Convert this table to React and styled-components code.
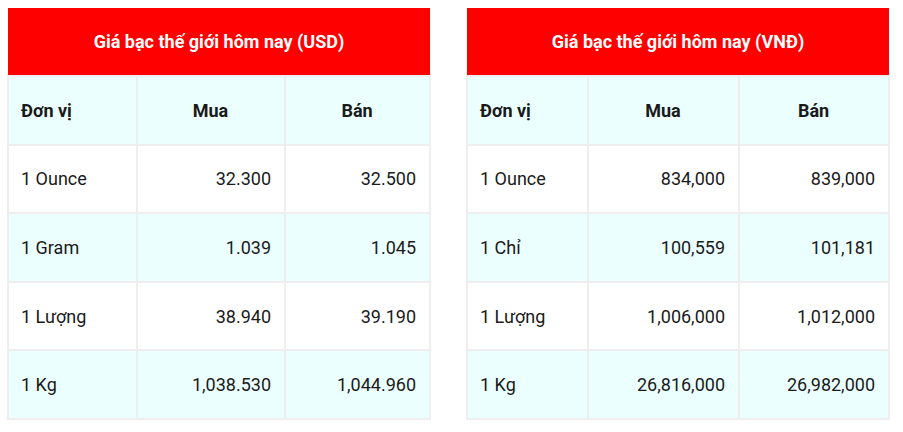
import React from 'react'
import styled, { createGlobalStyle } from 'styled-components'

const Global = createGlobalStyle`
  body {
    margin: 0;
    background: #fff;
    font-family: Roboto, "Noto Sans", Arial, sans-serif;
  }
`

const Page = styled.div`
  display: flex;
  gap: 35px;
  padding: 8px 7px;
`

const Table = styled.table`
  border-collapse: collapse;
  width: ${props => props.width}px;
  table-layout: fixed;
  font-size: 18px;
  color: #1a1a1a;
`

const Caption = styled.th`
  background: #ff0000;
  color: #fff;
  font-weight: 700;
  font-size: 18px;
  height: 67px;
  padding: 0;
  text-align: center;
  border: none;
`

const Row = styled.tr`
  background: ${props => props.alt ? '#ebffff' : '#fff'};
`

const Cell = styled.td`
  height: 66.6px;
  padding: 0 13px 0 12px;
  border: 2px solid #eeeeee;
  text-align: ${props => props.align || 'left'};
  font-weight: ${props => props.head ? 700 : 400};
  white-space: nowrap;
`

const tables = [
  {
    title: 'Giá bạc thế giới hôm nay (USD)',
    width: 422,
    cols: [129, 148, 145],
    rows: [
      ['1 Ounce', '32.300', '32.500'],
      ['1 Gram', '1.039', '1.045'],
      ['1 Lượng', '38.940', '39.190'],
      ['1 Kg', '1,038.530', '1,044.960'],
    ],
  },
  {
    title: 'Giá bạc thế giới hôm nay (VNĐ)',
    width: 422,
    cols: [121, 151, 150],
    rows: [
      ['1 Ounce', '834,000', '839,000'],
      ['1 Chỉ', '100,559', '101,181'],
      ['1 Lượng', '1,006,000', '1,012,000'],
      ['1 Kg', '26,816,000', '26,982,000'],
    ],
  },
]

function PriceTable({ title, width, cols, rows }) {
  return (
    <Table width={width}>
      <colgroup>
        {cols.map((w, i) => <col key={i} style={{ width: w }} />)}
      </colgroup>
      <thead>
        <tr>
          <Caption colSpan={3}>{title}</Caption>
        </tr>
      </thead>
      <tbody>
        <Row alt>
          <Cell head>Đơn vị</Cell>
          <Cell head align="center">Mua</Cell>
          <Cell head align="center">Bán</Cell>
        </Row>
        {rows.map((r, i) => (
          <Row key={r[0]} alt={i % 2 === 1}>
            <Cell>{r[0]}</Cell>
            <Cell align="right">{r[1]}</Cell>
            <Cell align="right">{r[2]}</Cell>
          </Row>
        ))}
      </tbody>
    </Table>
  )
}

export default function App() {
  return (
    <>
      <Global />
      <Page>
        {tables.map(t => <PriceTable key={t.title} {...t} />)}
      </Page>
    </>
  )
}
